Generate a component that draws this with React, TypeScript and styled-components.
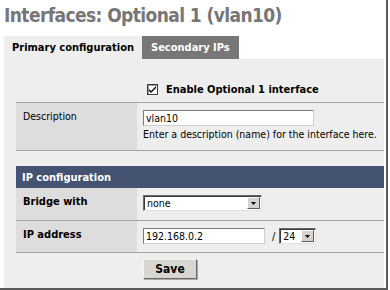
import React from "react";
import styled, { createGlobalStyle } from "styled-components";

const Global = createGlobalStyle`
  html, body { margin: 0; padding: 0; background: #ffffff; }
  body { font-family: "DejaVu Sans Condensed", "DejaVu Sans", sans-serif; font-size: 10.5px; color: #000; }
`;

const Frame = styled.div`
  width: 386px;
  height: 288px;
  border-right: 2px solid #5a5a5a;
  border-bottom: 2px solid #5a5a5a;
  box-sizing: content-box;
  display: flex;
  flex-direction: column;
  overflow: hidden;
`;

const Title = styled.h1`
  margin: 0;
  height: 36px;
  padding: 4px 0 0 4px;
  box-sizing: border-box;
  font-size: 19px;
  letter-spacing: -0.6px;
  font-weight: bold;
  color: #767676;
  line-height: 22px;
`;

const TabBar = styled.div`
  display: flex;
  margin-left: 4px;
  height: 23px;
`;

const Tab = styled.div<{ $active?: boolean }>`
  display: flex;
  align-items: center;
  padding: 0 ${(p) => (p.$active ? 8 : 9)}px;
  font-weight: bold;
  font-size: 11px;
  background: ${(p) => (p.$active ? "#eeeeee" : "#777777")};
  color: ${(p) => (p.$active ? "#000000" : "#ffffff")};
`;

const Panel = styled.div`
  flex: 1;
  margin-left: 4px;
  margin-right: 2px;
  padding-left: 12px;
  background: #eeeeee;
  display: flex;
  flex-direction: column;
`;

const Row = styled.div<{ $h: number; $line?: boolean }>`
  display: grid;
  grid-template-columns: 121px 1fr;
  height: ${(p) => p.$h}px;
  border-bottom: ${(p) => (p.$line ? "1px solid #a4a4a4" : "none")};
`;

const Label = styled.div<{ $shade?: boolean; $bold?: boolean }>`
  background: ${(p) => (p.$shade ? "#dddddd" : "transparent")};
  padding: 7px 0 0 7px;
  font-weight: ${(p) => (p.$bold ? "bold" : "normal")};
  font-size: ${(p) => (p.$bold ? "11px" : "10.5px")};
`;

const Value = styled.div<{ $pt: number }>`
  padding: ${(p) => p.$pt}px 0 0 6px;
  display: flex;
  flex-direction: column;
  align-items: flex-start;
`;

const Inline = styled.div`
  display: flex;
  align-items: center;
`;

const CheckBox = styled.span`
  width: 11px;
  height: 11px;
  box-sizing: border-box;
  margin-left: 4px;
  border: 1px solid #3a3a3a;
  box-shadow: inset 1px 1px 0 #9a9a9a;
  background: #ffffff;
  display: flex;
  align-items: center;
  justify-content: center;
`;

const CheckText = styled.span`
  margin-left: 8px;
  font-weight: bold;
  font-size: 11px;
`;

const TextInput = styled.div<{ $w: number }>`
  width: ${(p) => p.$w}px;
  height: 16px;
  box-sizing: border-box;
  background: #ffffff;
  border: 1px solid;
  border-color: #7a7a7a #d0d0d0 #d0d0d0 #7a7a7a;
  padding: 0 2px;
  font-size: 10.5px;
  line-height: 14px;
`;

const Hint = styled.div`
  margin-top: 2px;
  font-size: 10.5px;
  white-space: nowrap;
`;

const Spacer = styled.div`
  height: 15px;
`;

const Header = styled.div`
  height: 22px;
  background: #435371;
  color: #ffffff;
  font-weight: bold;
  font-size: 11px;
  display: flex;
  align-items: center;
  padding-left: 6px;
`;

const Select = styled.div<{ $w: number }>`
  width: ${(p) => p.$w}px;
  height: 16px;
  box-sizing: border-box;
  background: #ffffff;
  border: 1px solid;
  border-color: #6a6a6a #e0e0e0 #e0e0e0 #6a6a6a;
  box-shadow: inset 1px 1px 0 #3a3a3a;
  display: flex;
  align-items: center;
  justify-content: space-between;
  padding-left: 3px;
  font-size: 10.5px;
`;

const Arrow = styled.span`
  width: 13px;
  height: 12px;
  margin-right: 1px;
  box-sizing: border-box;
  background: #d6d3ce;
  border: 1px solid;
  border-color: #ffffff #5a5a5a #5a5a5a #ffffff;
  display: flex;
  align-items: center;
  justify-content: center;
`;

const Slash = styled.span`
  margin: 0 4px 0 7px;
  font-size: 11px;
`;

const SaveButton = styled.button`
  width: 54px;
  height: 20px;
  background: #d8d6d0;
  border: 1px solid;
  border-color: #f4f4f4 #6a6a6a #6a6a6a #f4f4f4;
  box-shadow: 1px 1px 0 #aaaaaa;
  font-family: inherit;
  font-weight: bold;
  font-size: 12px;
  padding: 0;
  color: #000;
`;

const Tri = () => (
  <svg width="5" height="3" viewBox="0 0 5 3">
    <path d="M0 0h5L2.5 3z" fill="#000" />
  </svg>
);

export default function App() {
  return (
    <>
      <Global />
      <Frame>
        <Title>Interfaces: Optional 1 (vlan10)</Title>
        <TabBar>
          <Tab $active>Primary configuration</Tab>
          <Tab>Secondary IPs</Tab>
        </TabBar>
        <Panel>
          <Row $h={43} $line>
            <Label />
            <Value $pt={24}>
              <Inline>
                <CheckBox>
                  <svg width="9" height="9" viewBox="0 0 9 9">
                    <path d="M1 4l2 2 5-5v2L3 8 1 6z" fill="#000" />
                  </svg>
                </CheckBox>
                <CheckText>Enable Optional 1 interface</CheckText>
              </Inline>
            </Value>
          </Row>
          <Row $h={47} $line>
            <Label $shade>Description</Label>
            <Value $pt={7}>
              <TextInput $w={171}>vlan10</TextInput>
              <Hint>Enter a description (name) for the interface here.</Hint>
            </Value>
          </Row>
          <Spacer />
          <Header>IP configuration</Header>
          <Row $h={32} $line>
            <Label $shade $bold>Bridge with</Label>
            <Value $pt={7}>
              <Select $w={119}>
                none
                <Arrow><Tri /></Arrow>
              </Select>
            </Value>
          </Row>
          <Row $h={31} $line>
            <Label $shade $bold>IP address</Label>
            <Value $pt={7}>
              <Inline>
                <TextInput $w={122}>192.168.0.2</TextInput>
                <Slash>/</Slash>
                <Select $w={37}>
                  24
                  <Arrow><Tri /></Arrow>
                </Select>
              </Inline>
            </Value>
          </Row>
          <Row $h={35}>
            <Label />
            <Value $pt={6}>
              <SaveButton>Save</SaveButton>
            </Value>
          </Row>
        </Panel>
      </Frame>
    </>
  );
}
